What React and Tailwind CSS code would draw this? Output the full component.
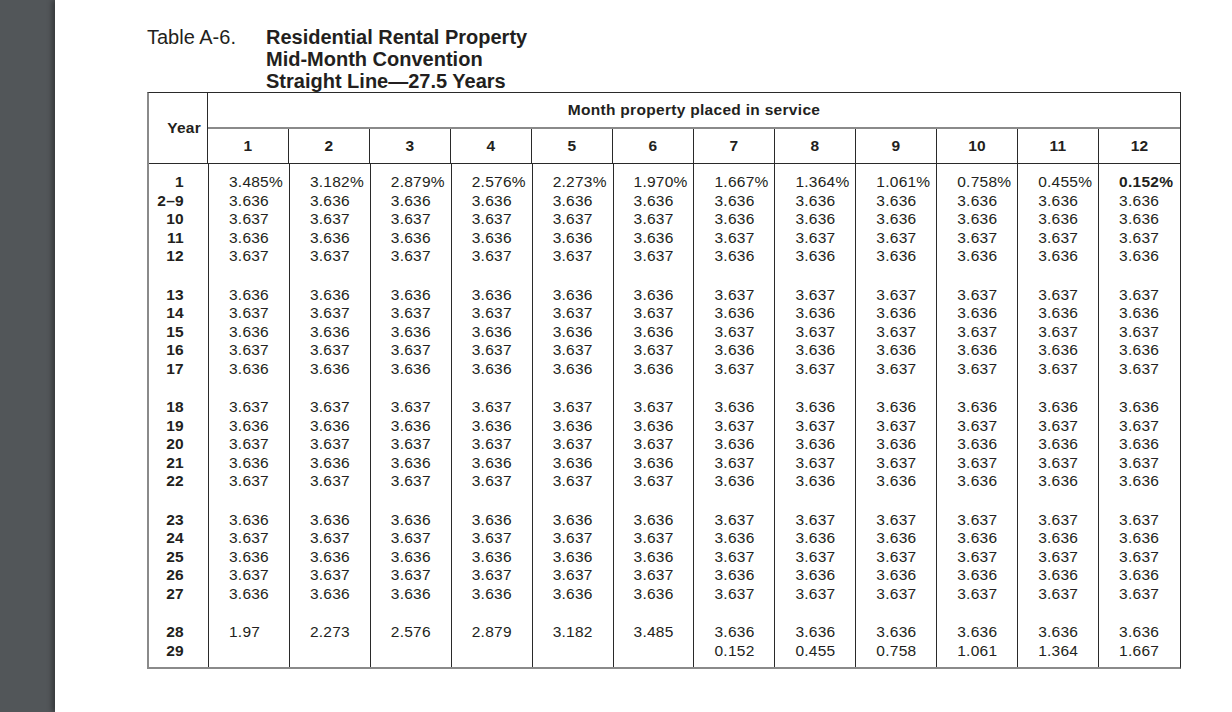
import React from "react";

const first = ["3.485%", "3.182%", "2.879%", "2.576%", "2.273%", "1.970%", "1.667%", "1.364%", "1.061%", "0.758%", "0.455%", "0.152%"];
const alt = (y) => {
  const a = y % 2 === 0 ? "3.637" : "3.636";
  const b = a === "3.637" ? "3.636" : "3.637";
  return [...Array(6).fill(a), ...Array(6).fill(b)];
};

const groups = [
  [["1", first], ["2–9", Array(12).fill("3.636")], ["10", alt(10)], ["11", alt(11)], ["12", alt(12)]],
  [13, 14, 15, 16, 17].map((y) => [String(y), alt(y)]),
  [18, 19, 20, 21, 22].map((y) => [String(y), alt(y)]),
  [23, 24, 25, 26, 27].map((y) => [String(y), alt(y)]),
  [
    ["28", ["1.97", "2.273", "2.576", "2.879", "3.182", "3.485", "3.636", "3.636", "3.636", "3.636", "3.636", "3.636"]],
    ["29", ["", "", "", "", "", "", "0.152", "0.455", "0.758", "1.061", "1.364", "1.667"]],
  ],
];

const months = [1, 2, 3, 4, 5, 6, 7, 8, 9, 10, 11, 12];

function Column({ index }) {
  const isYear = index === -1;
  return (
    <div
      className={
        isYear
          ? "w-[60px] border-r border-r-[#2a2a2a] flex flex-col gap-[20px] pt-[9px] pb-[7px] pr-[24px] text-right font-bold"
          : index === 11
          ? "w-[81px] flex flex-col gap-[20px] pt-[9px] pb-[7px] pl-[20px]"
          : "w-[81px] border-r border-r-[#2a2a2a] flex flex-col gap-[20px] pt-[9px] pb-[7px] pl-[20px]"
      }
    >
      {groups.map((g, gi) => (
        <div key={gi} className="flex flex-col">
          {g.map(([year, vals], ri) => {
            const text = isYear ? year : vals[index];
            const bold = !isYear && gi === 0 && ri === 0 && index === 11;
            return (
              <div
                key={ri}
                className={
                  bold
                    ? "h-[18.5px] leading-[18.5px] whitespace-nowrap font-bold"
                    : "h-[18.5px] leading-[18.5px] whitespace-nowrap"
                }
              >
                {text === "" ? "\u00a0" : text}
              </div>
            );
          })}
        </div>
      ))}
    </div>
  );
}

export default function App() {
  return (
    <div className="flex w-[1232px] h-[712px] overflow-hidden font-['Liberation_Sans',Arial,sans-serif] text-[#231f20]">
      <div className="w-[55px] h-full bg-[#525659] shrink-0" />
      <div className="flex-1 h-full bg-white shadow-[-3px_0_5px_rgba(0,0,0,0.35)] pl-[92px] pt-[26px]">
        <div className="flex text-[20px] leading-[22px]">
          <div className="w-[119px]">Table A-6.</div>
          <div className="font-bold flex flex-col">
            <div>Residential Rental Property</div>
            <div>Mid-Month Convention</div>
            <div>Straight Line—27.5 Years</div>
          </div>
        </div>
        <div className="w-[1034px] border-t border-t-[#2a2a2a] border-r border-r-[#2a2a2a] border-l-2 border-l-[#8a8a8a] border-b-2 border-b-[#8a8a8a] text-[15.5px] tracking-[0.25px]">
          <div className="flex border-b border-b-[#2a2a2a]">
            <div className="w-[60px] border-r border-r-[#2a2a2a] flex items-center justify-end pr-[6px] font-bold">
              Year
            </div>
            <div className="flex flex-col">
              <div className="h-[36px] border-b-2 border-b-[#8a8a8a] flex items-center justify-center font-bold text-[15.5px] tracking-[0.3px]">
                Month property placed in service
              </div>
              <div className="flex h-[34px]">
                {months.map((m) => (
                  <div
                    key={m}
                    className={
                      m === 12
                        ? "w-[81px] flex items-center justify-center font-bold"
                        : "w-[81px] border-r border-r-[#2a2a2a] flex items-center justify-center font-bold"
                    }
                  >
                    {m}
                  </div>
                ))}
              </div>
            </div>
          </div>
          <div className="flex">
            <Column index={-1} />
            {months.map((m, i) => (
              <Column key={m} index={i} />
            ))}
          </div>
        </div>
      </div>
    </div>
  );
}
